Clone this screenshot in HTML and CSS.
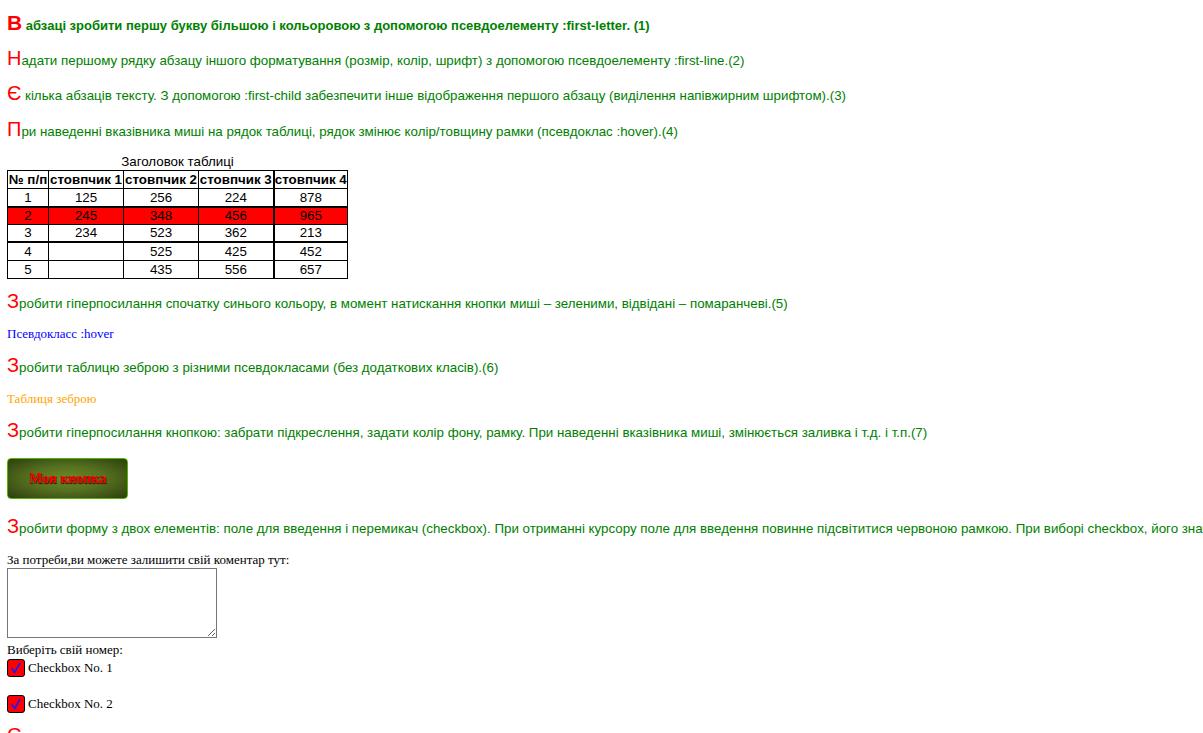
FILE: index.html
```html
<!DOCTYPE html>
<html lang="uk">
<head>
<meta charset="utf-8">
<title>Псевдокласи та псевдоелементи</title>
<link rel="stylesheet" href="styles.css">
</head>
<body>
<div class="page">
  <p class="task task-first gap-15">В абзаці зробити першу букву більшою і кольоровою з допомогою псевдоелементу :first-letter. (1)</p>
  <p class="task gap-13">Надати першому рядку абзацу іншого форматування (розмір, колір, шрифт) з допомогою псевдоелементу :first-line.(2)</p>
  <p class="task gap-13">Є кілька абзаців тексту. З допомогою :first-child забезпечити інше відображення першого абзацу (виділення напівжирним шрифтом).(3)</p>
  <p class="task gap-14">При наведенні вказівника миші на рядок таблиці, рядок змінює колір/товщину рамки (псевдоклас :hover).(4)</p>

  <table class="data">
    <caption>Заголовок таблиці</caption>
    <colgroup>
      <col class="c-num"><col class="c-col"><col class="c-col"><col class="c-col"><col class="c-last">
    </colgroup>
    <thead>
      <tr><th>№ п/п</th><th>стовпчик 1</th><th>стовпчик 2</th><th>стовпчик 3</th><th class="thick-left">стовпчик 4</th></tr>
    </thead>
    <tbody>
      <tr><td>1</td><td>125</td><td>256</td><td>224</td><td class="thick-left">878</td></tr>
      <tr class="hovered"><td>2</td><td>245</td><td>348</td><td>456</td><td class="thick-left">965</td></tr>
      <tr class="thick-bottom"><td>3</td><td>234</td><td>523</td><td>362</td><td class="thick-left">213</td></tr>
      <tr><td>4</td><td></td><td>525</td><td>425</td><td class="thick-left">452</td></tr>
      <tr><td>5</td><td></td><td>435</td><td>556</td><td class="thick-left">657</td></tr>
    </tbody>
  </table>

  <p class="task gap-14">Зробити гіперпосилання спочатку синього кольору, в момент натискання кнопки миші – зеленими, відвідані – помаранчеві.(5)</p>
  <p class="demo gap-11"><a class="link-blue" href="#hover">Псевдокласс :hover</a></p>
  <p class="task gap-15">Зробити таблицю зеброю з різними псевдокласами (без додаткових класів).(6)</p>
  <p class="demo gap-12"><a class="link-orange" href="#zebra">Таблиця зеброю</a></p>
  <p class="task gap-15">Зробити гіперпосилання кнопкою: забрати підкреслення, задати колір фону, рамку. При наведенні вказівника миші, змінюється заливка і т.д. і т.п.(7)</p>
  <div class="btn-row"><a class="btn" href="#button">Моя кнопка</a></div>
  <p class="task nowrap gap-18">Зробити форму з двох елементів: поле для введення і перемикач (checkbox). При отриманні курсору поле для введення повинне підсвітитися червоною рамкою. При виборі checkbox, його значення повинне змінити колір.(8)</p>

  <form class="form">
    <label class="form-label" for="comment">За потреби,ви можете залишити свій коментар тут:</label>
    <textarea id="comment" class="comment"></textarea>
    <div class="form-label gap-4">Виберіть свій номер:</div>
    <label class="check gap-1"><span class="box"><svg viewBox="0 0 18 18" width="18" height="18"><path d="M5 9.5 L7.6 13.5 L12.8 4.5" fill="none" stroke="#1a1aff" stroke-width="1.6" stroke-linecap="round" stroke-linejoin="round"/></svg></span>Checkbox No. 1</label>
    <label class="check gap-18"><span class="box"><svg viewBox="0 0 18 18" width="18" height="18"><path d="M5 9.5 L7.6 13.5 L12.8 4.5" fill="none" stroke="#1a1aff" stroke-width="1.6" stroke-linecap="round" stroke-linejoin="round"/></svg></span>Checkbox No. 2</label>
  </form>

  <p class="task gap-14">Створити меню.(9)</p>
</div>
</body>
</html>
```

FILE: styles.css
```css
html {
  overflow: hidden;
}

body {
  margin: 0;
  background: #ffffff;
  font-family: "Liberation Serif", "Times New Roman", serif;
  font-size: 13px;
  color: #000;
}

.page {
  padding: 0 7px;
}

.gap-1 { margin-top: 1px; }
.gap-4 { margin-top: 4px; }
.gap-11 { margin-top: 11px; }
.gap-12 { margin-top: 12px; }
.gap-13 { margin-top: 13px; }
.gap-14 { margin-top: 14px; }
.gap-15 { margin-top: 15px; }
.gap-18 { margin-top: 18px; }

.task {
  margin-bottom: 0;
  font-family: "Liberation Sans", Arial, sans-serif;
  font-size: 13.33px;
  line-height: 22px;
  height: 22px;
  color: #008000;
}

.task::first-letter {
  color: #ff0000;
  font-size: 20px;
  line-height: 14px;
}

.task-first {
  font-weight: bold;
  font-size: 13px;
}

.task-first::first-letter {
  font-size: 21px;
}

.nowrap {
  white-space: nowrap;
}

.demo {
  margin-bottom: 0;
  line-height: 16px;
  height: 16px;
  font-size: 13px;
}

.link-blue {
  color: #0000ff;
  text-decoration: none;
}

.link-orange {
  color: #ffa500;
  text-decoration: none;
}

/* table */
.data {
  margin-top: 11px;
  border-collapse: collapse;
  table-layout: fixed;
  width: 341px;
  font-family: "Liberation Sans", Arial, sans-serif;
  font-size: 13.33px;
  color: #000;
}

.data caption {
  line-height: 16px;
  text-align: center;
}

.c-num { width: 41px; }
.c-col { width: 75px; }
.c-last { width: 74px; }

.data th,
.data td {
  border: 1px solid #000;
  padding: 0;
  height: 17px;
  line-height: 17px;
  text-align: center;
  white-space: nowrap;
  overflow: hidden;
}

.data th {
  font-weight: bold;
}

.data .hovered td {
  background: #ff0000;
  border-top-width: 2px;
  height: 16px;
  line-height: 16px;
}

.data .thick-bottom td {
  border-bottom-width: 2px;
  height: 16px;
  line-height: 16px;
}

.data .thick-left {
  border-left-width: 2px;
}

/* button link */
.btn-row {
  margin-top: 15px;
  height: 41px;
}

.btn {
  display: inline-flex;
  align-items: center;
  justify-content: center;
  box-sizing: border-box;
  width: 121px;
  height: 41px;
  margin-top: -1px;
  border: 1px solid #4cb800;
  border-radius: 4px;
  background: radial-gradient(ellipse at center, #6b8a2a 0%, #55701f 45%, #2e3d0f 100%);
  color: #ff0000;
  font-family: "Liberation Serif", "Times New Roman", serif;
  font-weight: bold;
  font-size: 14px;
  text-decoration: none;
  text-shadow: 1px 1px 1px #1a1a00;
}

/* form */
.form {
  margin: 12px 0 0;
}

.form-label {
  display: block;
  line-height: 16px;
  height: 16px;
  font-size: 13px;
}

.comment {
  display: block;
  box-sizing: border-box;
  width: 210px;
  height: 70px;
  margin: 0;
  border: 1px solid #767676;
  padding: 2px;
  font-family: "Liberation Mono", monospace;
  font-size: 13px;
}

.check {
  display: flex;
  align-items: center;
  gap: 3px;
  height: 18px;
  font-size: 13px;
}

.box {
  display: inline-flex;
  box-sizing: border-box;
  width: 18px;
  height: 18px;
  border: 1px solid #000;
  border-radius: 3px;
  background: #ff0000;
  overflow: hidden;
}

.box svg {
  display: block;
  margin: -1px;
}
```
